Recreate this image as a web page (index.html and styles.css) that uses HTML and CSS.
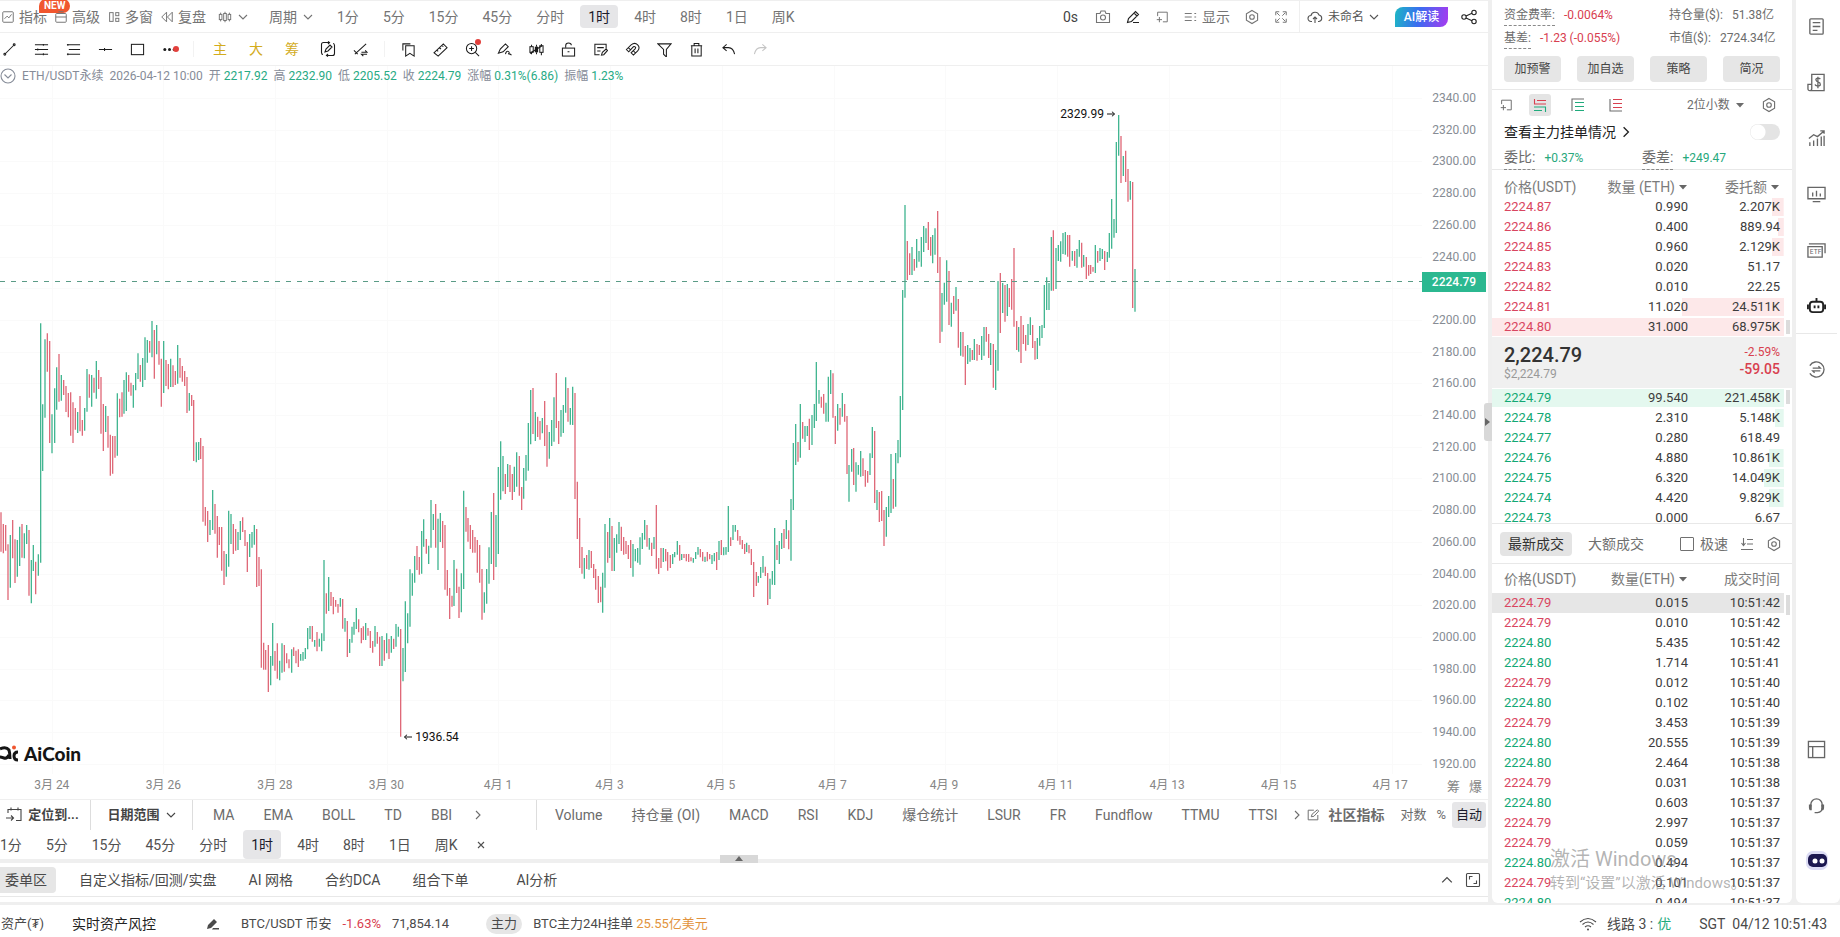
FILE: index.html
```html
<!DOCTYPE html>
<html lang="zh-CN">
<head>
<meta charset="utf-8">
<title>ETH/USDT永续 - AiCoin</title>
<link rel="stylesheet" href="styles.css">
</head>
<body>
<svg class="sprite" width="0" height="0" aria-hidden="true">
  <symbol id="down" viewBox="0 0 10 10"><path d="M1 3l4 4 4-4"/></symbol>
  <symbol id="up" viewBox="0 0 10 10"><path d="M1 7l4-4 4 4"/></symbol>
  <symbol id="right" viewBox="0 0 10 10"><path d="M3 1l4 4-4 4"/></symbol>
  <symbol id="tri" viewBox="0 0 10 10"><path class="fill" d="M1 3h8L5 7.500z"/></symbol>
  <symbol id="hex" viewBox="0 0 16 16"><path d="M8 1.500l5.600 3.200v6.600L8 14.500l-5.600-3.200V4.700z"/><circle cx="8" cy="8" r="2.300"/></symbol>
  <symbol id="dock" viewBox="0 0 16 16"><path d="M3 7V2.500h11v11H9M2 11h6M5 8v6"/></symbol>
  <symbol id="pencil" viewBox="0 0 16 16"><path d="M2.500 13.500l1-4 7-7 3 3-7 7zM9 4l3 3M8 13.500h6"/></symbol>
  <symbol id="edit" viewBox="0 0 16 16"><path d="M9 2.500H2.500v11h11V8M6 10l1-3 6-5 1.500 1.500-5.500 6z"/></symbol>
</svg>

<div class="app">
  <main class="main">
    <header class="bar top">
      <div class="tools">
        <button class="tool"><svg class="ic s14" viewBox="0 0 16 16"><rect x="2" y="2" width="12" height="12" rx="1"/><path d="M4 10l3-3 2 2 3-4"/></svg>指标<span class="new">NEW</span></button>
        <button class="tool"><svg class="ic s14" viewBox="0 0 16 16"><rect x="2" y="4" width="12" height="10" rx="1"/><path d="M2 8h12M5 2h6"/></svg>高级</button>
        <button class="tool"><svg class="ic s14" viewBox="0 0 16 16"><rect x="3" y="3" width="4" height="10"/><rect x="10" y="3" width="3.500" height="3.500"/><rect x="10" y="9.500" width="3.500" height="3.500"/></svg>多窗</button>
        <button class="tool"><svg class="ic s14" viewBox="0 0 16 16"><path d="M7.500 2.500v11L2 8zM14 2.500v11L8.500 8z"/></svg>复盘</button>
      </div>
      <button class="tool kind" aria-label="图表类型"><svg class="ic s14" viewBox="0 0 16 16"><rect x="1.500" y="5" width="3" height="6"/><rect x="6.500" y="4" width="3" height="8"/><rect x="11.500" y="5" width="3" height="6"/><path d="M3 3v2M3 11v2M8 2v2M8 12v2M13 3v2M13 11v2"/></svg><svg class="ic s10"><use href="#down"/></svg></button>
      <button class="tool cycle">周期<svg class="ic s10"><use href="#down"/></svg></button>
      <nav class="periods">
        <button>1分</button><button>5分</button><button>15分</button><button>45分</button><button>分时</button><button class="on">1时</button><button>4时</button><button>8时</button><button>1日</button><button>周K</button>
      </nav>
      <div class="topright">
        <span class="sec">0s</span>
        <button aria-label="截图"><svg class="ic s16" viewBox="0 0 16 16"><path d="M1.500 4.500H5L6 2h4l1 2.500h3.500v9h-13z"/><circle cx="8" cy="8.500" r="2.500"/></svg></button>
        <button aria-label="画笔" class="dark"><svg class="ic s16"><use href="#pencil"/></svg></button>
        <button aria-label="停靠"><svg class="ic s14"><use href="#dock"/></svg></button>
        <button class="tool"><svg class="ic s14" viewBox="0 0 16 16"><path d="M2 4h8M2 8h8M2 12h8M13 4h2M13 8h2M13 12h2"/></svg>显示</button>
        <button aria-label="设置"><svg class="ic s16"><use href="#hex"/></svg></button>
        <button aria-label="全屏"><svg class="ic s14" viewBox="0 0 16 16"><path d="M2 6V2h4M10 2h4v4M14 10v4h-4M6 14H2v-4M3 3l3.500 3.500M13 3L9.500 6.500M13 13L9.500 9.500M3 13l3.500-3.500"/></svg></button>
      </div>
      <div class="account">
        <button class="tool small"><svg class="ic s16" viewBox="0 0 16 16"><path d="M5 12.500H4a3 3 0 0 1 0-6 4.200 4.200 0 0 1 8-.5 3.300 3.300 0 0 1 0 6.500h-1M8 14V8M6 10l2-2 2 2"/></svg>未命名<svg class="ic s10"><use href="#down"/></svg></button>
        <button class="ai">AI解读</button>
        <button class="dark" aria-label="分享"><svg class="ic s18" viewBox="0 0 18 18"><circle cx="4" cy="9" r="2.200"/><circle cx="14" cy="4.500" r="2.200"/><circle cx="14" cy="13.500" r="2.200"/><path d="M6 8l6-2.700M6 10l6 2.700"/></svg></button>
      </div>
    </header>

    <div class="bar draw">
      <div class="slots first">
        <button aria-label="线段"><svg class="ic" viewBox="0 0 16 16"><path d="M4 12l8-8"/><circle cx="3" cy="13" r="1"/><circle cx="13" cy="3" r="1"/></svg></button>
        <button aria-label="水平线"><svg class="ic" viewBox="0 0 16 16"><path d="M1 3h14M1 8h14M1 13h14M10 2v2M4 7v2M10 12v2"/></svg></button>
        <button aria-label="平行线"><svg class="ic" viewBox="0 0 16 16"><path d="M1 3h14M3 8h12M1 13h14M2 2v2M2 12v2"/></svg></button>
        <button aria-label="射线"><svg class="ic" viewBox="0 0 16 16"><path d="M1 8h14M7 6.500v3"/></svg></button>
        <button aria-label="矩形"><svg class="ic" viewBox="0 0 16 16"><rect x="1.500" y="2.500" width="13" height="11"/></svg></button>
        <button aria-label="更多" class="dotred low"><svg class="ic" viewBox="0 0 16 16"><g class="fill"><circle cx="3" cy="8" r="1.600"/><circle cx="8" cy="8" r="1.600"/><circle cx="13" cy="8" r="1.600"/></g></svg></button>
      </div>
      <div class="slots words"><button>主</button><button>大</button><button>筹</button></div>
      <div class="slots second">
        <button aria-label="编辑图形"><svg class="ic s16" viewBox="0 0 16 16"><path d="M9 1.500H3.500q-2 0-2 2v8q0 2 1.500 2M7 14.500h5.500q2 0 2-2v-8q0-2-1.500-2M8 .5l1.500 1L8 3M8 13l-1.500 1.500L8 15.500M5 11l1-3 4-4 2 2-4 4z"/></svg></button>
        <button aria-label="连续画线"><svg class="ic" viewBox="0 0 16 16"><path d="M2 13L14 2M1 9l4 4M9 11h6l-2-2M15 13H9l2 2"/></svg></button>
      </div>
      <div class="slots third">
        <button aria-label="收藏"><svg class="ic" viewBox="0 0 16 16"><path d="M5 4h9v11l-4.500-3L5 15zM2 9V2h8"/></svg></button>
        <button aria-label="测量"><svg class="ic" viewBox="0 0 16 16"><path d="M1 11.500L11 2l4 4-9.500 9zM4 8.500l1.500 1.500M7 6l1.500 1.500M9.500 3.500L11 5"/></svg></button>
        <button aria-label="放大" class="dotred high"><svg class="ic" viewBox="0 0 16 16"><circle cx="7" cy="7" r="5.500"/><path d="M11 11l4 4M4.500 7h5M7 4.500v5"/></svg></button>
        <button aria-label="笔刷"><svg class="ic" viewBox="0 0 16 16"><path d="M1.500 12l2-4.500L9 2l3 3-5.500 5.500L1.500 12zM9 13q1-4 3-3t0 3q1-1 3.500 1"/></svg></button>
        <button aria-label="K线"><svg class="ic" viewBox="0 0 16 16"><rect x="1" y="5" width="3.500" height="6"/><rect x="6.200" y="5" width="3.500" height="6" class="fill"/><rect x="11.500" y="4" width="3.500" height="7"/><path d="M2.700 3v2M2.700 11v2M8 3v2M8 11v2M13.200 2v2M13.200 11v3M1 12l13-8"/></svg></button>
        <button aria-label="锁定"><svg class="ic" viewBox="0 0 16 16"><rect x="1.500" y="6.500" width="13" height="8.500"/><path d="M5 6V4q0-3 3-3t3 2.500M7 10.500h2"/></svg></button>
        <button aria-label="笔记"><svg class="ic" viewBox="0 0 16 16"><path d="M14 7V2.500H2v11h5M4.500 6h7M4.500 9.500H8M9 14l1-3 4-3.500 1.500 1.500-4 4.500z"/></svg></button>
        <button aria-label="磁铁"><svg class="ic" viewBox="0 0 16 16"><path d="M1.500 8l5-5q4-3 7 0t0 6.500L9 14l-2.500-2.500 4.500-4.500q1-1.500-.5-2t-2 .5L4 10.500zM3.500 6l2.500 2.500M9 9.500l2.500 2.500"/></svg></button>
        <button aria-label="筛选"><svg class="ic" viewBox="0 0 16 16"><path d="M1 2h14L10 8v8l-3-3V8z"/></svg></button>
        <button aria-label="删除"><svg class="ic" viewBox="0 0 16 16"><path d="M2 4h12M5.500 4V1.500h5V4M3 4v11h10V4M6.500 7v5M9.500 7v5"/></svg></button>
        <button aria-label="撤销"><svg class="ic" viewBox="0 0 16 16"><path d="M6 2.500L2 6l4 3.500M2 6h6q5 0 6.500 7"/></svg></button>
        <button aria-label="重做" class="off"><svg class="ic" viewBox="0 0 16 16"><path d="M10 2.500L14 6l-4 3.500M14 6H8Q3 6 1.500 13"/></svg></button>
      </div>
    </div>

    <section class="chart">
      <svg class="plot" viewBox="0 0 1488 708" preserveAspectRatio="none">
        <path id="grid" class="gridline"/>
        <path id="rise" class="rise"/>
        <path id="fall" class="fall"/>
        <path class="last" d="M0 215.500H1422"/>
      </svg>
      <p class="info"><svg class="ic s16" viewBox="0 0 16 16"><circle cx="8" cy="8" r="7"/><path d="M4.500 6.500L8 10l3.500-3.500"/></svg><span>ETH/USDT永续</span><span>2026-04-12 10:00</span><span>开 <b>2217.92</b></span><span>高 <b>2232.90</b></span><span>低 <b>2205.52</b></span><span>收 <b>2224.79</b></span><span>涨幅 <b>0.31%(6.86)</b></span><span>振幅 <b>1.23%</b></span></p>
      <div class="prices"><span>2340.00</span><span>2320.00</span><span>2300.00</span><span>2280.00</span><span>2260.00</span><span>2240.00</span><span class="hid">2220.00</span><span>2200.00</span><span>2180.00</span><span>2160.00</span><span>2140.00</span><span>2120.00</span><span>2100.00</span><span>2080.00</span><span>2060.00</span><span>2040.00</span><span>2020.00</span><span>2000.00</span><span>1980.00</span><span>1960.00</span><span>1940.00</span><span>1920.00</span></div>
      <span class="tag">2224.79</span>
      <span class="mark high">2329.99 <svg class="ic arrow" viewBox="0 0 10 10"><path d="M0 5h8M5.500 2.500L8.500 5l-3 2.500"/></svg></span>
      <span class="mark low"><svg class="ic arrow" viewBox="0 0 10 10"><path d="M10 5H2M4.500 2.500L1.500 5l3 2.500"/></svg> 1936.54</span>
      <span class="logo"><svg width="20" height="20" viewBox="0 0 20 20"><path class="ink" d="M0 5q6-3 9 1 1 3 1 9M9 11q-2 4-5 3t-4-1"/><path class="ink" d="M18 8q-4 0-4 4t4 4"/><circle class="spot" cx="14" cy="3.500" r="2"/></svg>AiCoin</span>
    </section>
    <div class="times">
      <div class="dates"><span>3月 24</span><span>3月 26</span><span>3月 28</span><span>3月 30</span><span>4月 1</span><span>4月 3</span><span>4月 5</span><span>4月 7</span><span>4月 9</span><span>4月 11</span><span>4月 13</span><span>4月 15</span><span>4月 17</span></div>
      <div class="chips"><button>筹</button><button>爆</button></div>
    </div>

    <div class="indicators">
      <button class="cell strong locate"><svg class="ic s18" viewBox="0 0 18 18"><path d="M3 7V3.500h13v11h-5M6 1.500v3M13 1.500v3M1 12h7M6 9.500L8.500 12 6 14.500"/></svg>定位到...</button>
      <button class="cell strong range">日期范围<svg class="ic s10"><use href="#down"/></svg></button>
      <div class="cell list main-ind"><button>MA</button><button>EMA</button><button>BOLL</button><button>TD</button><button>BBI</button><button class="next" aria-label="更多"><svg class="ic s10"><use href="#right"/></svg></button></div>
      <div class="cell list sub-ind"><button>Volume</button><button>持仓量 (OI)</button><button>MACD</button><button>RSI</button><button>KDJ</button><button>爆仓统计</button><button>LSUR</button><button>FR</button><button>Fundflow</button><button>TTMU</button><button>TTSI</button></div>
      <div class="cell scale"><svg class="ic s10"><use href="#right"/></svg><button class="community"><svg class="ic s14"><use href="#edit"/></svg>社区指标</button><button>对数</button><button>%</button><button class="on">自动</button></div>
    </div>
    <nav class="periods lower">
      <button>1分</button><button>5分</button><button>15分</button><button>45分</button><button>分时</button><button class="on">1时</button><button>4时</button><button>8时</button><button>1日</button><button>周K</button><button class="close" aria-label="关闭"><svg class="ic s8" viewBox="0 0 8 8"><path d="M1 1l6 6M7 1L1 7"/></svg></button>
    </nav>
    <div class="split"><button aria-label="展开"><svg class="ic s10"><path class="fill" d="M1 7h8L5 2z"/></svg></button></div>
    <nav class="orders">
      <button class="on">委单区</button><button>自定义指标/回测/实盘</button><button>AI 网格</button><button>合约DCA</button><button>组合下单</button><button class="analysis">AI分析</button>
      <div class="ordersright"><button aria-label="收起"><svg class="ic s12"><use href="#up" /></svg></button><button aria-label="最大化"><svg class="ic s16" viewBox="0 0 16 16"><rect x="1.500" y="1.500" width="13" height="13" rx="1"/><path d="M4.500 7.500v-3h3M11.500 8.500v3h-3"/></svg></button></div>
    </nav>
    <button class="fold" aria-label="折叠面板"><svg class="ic s10"><path class="fill" d="M2 1v8l5-4z"/></svg></button>
  </main>

  <aside class="panel">
    <div class="stats">
      <p><span class="dash">资金费率:</span><b class="red">-0.0064%</b></p><p>持仓量($):<b>51.38亿</b></p>
      <p><span class="dash">基差:</span><b class="red">-1.23 (-0.055%)</b></p><p>市值($):<b>2724.34亿</b></p>
    </div>
    <div class="actions"><button>加预警</button><button>加自选</button><button>策略</button><button>简况</button></div>
    <div class="views">
      <button aria-label="停靠"><svg class="ic s14"><use href="#dock"/></svg></button>
      <button class="on" aria-label="买卖盘"><svg class="ic s14" viewBox="0 0 14 14"><path class="cr" d="M1.500 1v5M4 2.500h9M1 6h12"/><path class="cg" d="M1 9h12M1 12.500h8M12.500 9v5"/></svg></button>
      <button aria-label="买盘"><svg class="ic s14" viewBox="0 0 14 14"><path d="M1 13V1h12"/><path class="cg" d="M4 4.500h9M4 8.500h9M4 12.500h9"/></svg></button>
      <button aria-label="卖盘"><svg class="ic s14" viewBox="0 0 14 14"><path d="M1 1v12h12"/><path class="cr" d="M4 1.500h9M4 5.500h9M4 9.500h9"/></svg></button>
      <label class="decimals"><select aria-label="小数位"><option>2位小数</option></select><svg class="ic s10"><use href="#tri"/></svg></label>
      <button aria-label="设置"><svg class="ic s16"><use href="#hex"/></svg></button>
    </div>
    <div class="whale"><label for="whale">查看主力挂单情况</label><svg class="ic s12"><use href="#right"/></svg><input id="whale" type="checkbox" class="toggle"></div>
    <div class="ratio"><p><span class="dash">委比:</span><b>+0.37%</b></p><p><span class="dash">委差:</span><b>+249.47</b></p></div>

    <table class="book asks">
      <thead><tr><th>价格(USDT)</th><th>数量 (ETH)<svg class="ic s10"><use href="#tri"/></svg></th><th>委托额<svg class="ic s10"><use href="#tri"/></svg></th></tr></thead>
      <tbody>
        <tr style="--d:4%"><td>2224.87</td><td>0.990</td><td>2.207K</td></tr>
        <tr style="--d:2%"><td>2224.86</td><td>0.400</td><td>889.94</td></tr>
        <tr style="--d:4%"><td>2224.85</td><td>0.960</td><td>2.129K</td></tr>
        <tr><td>2224.83</td><td>0.020</td><td>51.17</td></tr>
        <tr><td>2224.82</td><td>0.010</td><td>22.25</td></tr>
        <tr style="--d:35%"><td>2224.81</td><td>11.020</td><td>24.511K</td></tr>
        <tr style="--d:100%"><td>2224.80</td><td>31.000</td><td>68.975K</td></tr>
      </tbody>
    </table>
    <div class="price"><div><strong>2,224.79</strong><small>$2,224.79</small></div><div class="chg"><span>-2.59%</span><b>-59.05</b></div></div>
    <div class="clip">
      <table class="book bids">
        <tbody>
          <tr style="--d:100%"><td>2224.79</td><td>99.540</td><td>221.458K</td></tr>
          <tr style="--d:3%"><td>2224.78</td><td>2.310</td><td>5.148K</td></tr>
          <tr><td>2224.77</td><td>0.280</td><td>618.49</td></tr>
          <tr style="--d:5%"><td>2224.76</td><td>4.880</td><td>10.861K</td></tr>
          <tr style="--d:7%"><td>2224.75</td><td>6.320</td><td>14.049K</td></tr>
          <tr style="--d:5%"><td>2224.74</td><td>4.420</td><td>9.829K</td></tr>
          <tr><td>2224.73</td><td>0.000</td><td>6.67</td></tr>
        </tbody>
      </table>
    </div>
    <div class="deals"><button class="on">最新成交</button><button>大额成交</button><label class="fast"><input type="checkbox">极速</label><button aria-label="排序"><svg class="ic s14" viewBox="0 0 14 14"><path d="M7 2.500h6M7 7h6M1 12.500h12M3.500 1v7M1.500 6l2 2.500 2-2.500"/></svg></button><button aria-label="设置"><svg class="ic s16"><use href="#hex"/></svg></button></div>
    <div class="trades">
      <table class="book">
        <thead><tr><th>价格(USDT)</th><th>数量(ETH)<svg class="ic s10"><use href="#tri"/></svg></th><th>成交时间</th></tr></thead>
        <tbody>
          <tr class="sell hot"><td>2224.79</td><td>0.015</td><td>10:51:42</td></tr>
          <tr class="sell"><td>2224.79</td><td>0.010</td><td>10:51:42</td></tr>
          <tr class="buy"><td>2224.80</td><td>5.435</td><td>10:51:42</td></tr>
          <tr class="buy"><td>2224.80</td><td>1.714</td><td>10:51:41</td></tr>
          <tr class="sell"><td>2224.79</td><td>0.012</td><td>10:51:40</td></tr>
          <tr class="buy"><td>2224.80</td><td>0.102</td><td>10:51:40</td></tr>
          <tr class="sell"><td>2224.79</td><td>3.453</td><td>10:51:39</td></tr>
          <tr class="buy"><td>2224.80</td><td>20.555</td><td>10:51:39</td></tr>
          <tr class="buy"><td>2224.80</td><td>2.464</td><td>10:51:38</td></tr>
          <tr class="sell"><td>2224.79</td><td>0.031</td><td>10:51:38</td></tr>
          <tr class="buy"><td>2224.80</td><td>0.603</td><td>10:51:37</td></tr>
          <tr class="sell"><td>2224.79</td><td>2.997</td><td>10:51:37</td></tr>
          <tr class="sell"><td>2224.79</td><td>0.059</td><td>10:51:37</td></tr>
          <tr class="buy"><td>2224.80</td><td>0.494</td><td>10:51:37</td></tr>
          <tr class="sell"><td>2224.79</td><td>0.101</td><td>10:51:37</td></tr>
          <tr class="buy"><td>2224.80</td><td>0.494</td><td>10:51:37</td></tr>
        </tbody>
      </table>
    </div>
    <i class="thumb t1"></i><i class="thumb t2"></i><i class="thumb t3"></i>
    <div class="watermark"><p>激活 Windows</p><p>转到“设置”以激活 Windows。</p></div>
  </aside>

  <nav class="side">
    <button aria-label="资讯"><svg class="ic" viewBox="0 0 20 20"><rect x="3" y="2" width="14" height="16" rx="1"/><path d="M6 6h8M6 10h8M6 14h5"/></svg></button>
    <button aria-label="账单"><svg class="ic" viewBox="0 0 20 20"><path d="M5 1.500h13v17H3q-2 0-2-2V12h4zM5 12v4.500q0 2-2 2M14 6.500q-1-1.500-3-1t-1.500 2 2.500 2 2 2.500-3 1.500-2-1.500M11.500 4v12"/></svg></button>
    <button aria-label="行情"><svg class="ic" viewBox="0 0 20 20"><path d="M3 18v-4M7 18v-6M11 18V10M15 18V8M18 18V7M2 10l5-4 4 2 7-6M14 2h4v3"/></svg></button>
    <button aria-label="看板"><svg class="ic" viewBox="0 0 20 20"><path d="M1 2.500h18v12H1zM6 17.500h8M6 12V8M10 12V6M14 12V9"/></svg></button>
    <button aria-label="ETF"><svg class="ic" viewBox="0 0 20 20"><path d="M1 6h15v11H1zM2 3h17v10"/><text class="etf" x="3" y="14">ETF</text></svg></button>
    <button aria-label="AI" class="bot"><svg class="ic" viewBox="0 0 20 20"><rect x="3" y="6" width="14" height="11" rx="3"/><path d="M10 6V2M1 9v5M19 9v5M8 10v3M12 10v3"/></svg></button>
    <button aria-label="兑换" class="swap"><svg class="ic" viewBox="0 0 20 20"><path d="M3 6a8 8 0 1 1 0 8M6 8.500h8l-2-2M14 11.500H6l2 2"/></svg></button>
    <button aria-label="布局" class="push"><svg class="ic" viewBox="0 0 20 20"><rect x="1.500" y="1.500" width="17" height="17"/><path d="M1.500 7h17M6 7v11"/></svg></button>
    <button aria-label="客服"><svg class="ic" viewBox="0 0 20 20"><path d="M4 11V9a6 6 0 0 1 12 0v2M8 17.500h3q5-1 5-5"/><path class="fill" d="M2 9h3v6H3q-1-1-1-3zM15 9h3v3q0 2-1 3h-2z"/></svg></button>
    <button aria-label="助手"><svg width="22" height="22" viewBox="0 0 22 22"><rect class="halo" x="0" y="1" width="22" height="19" rx="7"/><rect class="face" x="2" y="4" width="19" height="13" rx="5"/><circle class="eye" cx="9" cy="11" r="2.500"/><circle class="eye" cx="16" cy="11" r="2.500"/></svg></button>
  </nav>
</div>

<footer class="status">
  <span>资产(₮)</span><span class="risk">实时资产风控</span>
  <button aria-label="编辑"><svg class="ic s14" viewBox="0 0 14 14"><path class="fill" d="M1 12l1-4 6-6 3 3-6 6zM7 11h6v1.500H6z"/></svg></button>
  <span class="pair">BTC/USDT 币安</span><span class="red">-1.63%</span><span>71,854.14</span>
  <span class="pill">主力</span><span class="whales">BTC主力24H挂单 <b>25.55亿美元</b></span>
  <div class="net"><svg class="ic s18" viewBox="0 0 18 18"><path d="M1 7q8-7 16 0M3.500 9.500q5.500-5 11 0M6 12q3-2.500 6 0"/><circle class="fill" cx="9" cy="14.500" r="1"/></svg>线路 3 : <b>优</b></div><time>SGT&nbsp; 04/12 10:51:43</time>
</footer>
<script src="chart.js"></script>
</body>
</html>
```
FILE: styles.css
```css
* { box-sizing: border-box; }
body { margin: 0; height: 100vh; display: flex; flex-direction: column; background: #efefef; color: #4a4a4a; font: 14px/20px Roboto, "Noto Sans CJK SC", sans-serif; overflow: hidden; }
p { margin: 0; }
b { font-weight: 400; }
button { border: 0; padding: 0; background: none; font: inherit; color: inherit; white-space: nowrap; display: flex; align-items: center; justify-content: center; }
.sprite { position: absolute; }
.ic { fill: none; stroke: currentColor; stroke-width: 1.1; width: 15px; height: 15px; flex: none; }
.ic .fill, .ic.fill { fill: currentColor; stroke: none; }
use .fill, symbol .fill { fill: currentColor; stroke: none; }
.s8 { width: 8px; height: 8px; }
.s10 { width: 10px; height: 10px; }
.s12 { width: 12px; height: 12px; }
.s14 { width: 14px; height: 14px; }
.s16 { width: 16px; height: 16px; }
.s18 { width: 18px; height: 18px; }
.red { color: #d8404f; }
.ic .cr { stroke: #d8404f; }
.ic .cg { stroke: #1fab7c; }

.app { flex: 1; min-height: 0; display: grid; grid-template-columns: 1fr 300px 44px; column-gap: 4px; }
.main { position: relative; min-width: 0; display: flex; flex-direction: column; background: #fff; margin-bottom: 1px; }

.bar { display: flex; align-items: center; height: 33px; flex: none; border-bottom: 1px solid #efefef; }
.top { border-top: 1px solid #efefef; color: #747474; }
.tools { display: flex; gap: 7px; padding-left: 1px; }
.tool { position: relative; gap: 5px; }
.tools .tool { gap: 4px; }
.new { position: absolute; left: 38px; top: -8px; padding: 0 5px; border-radius: 8px 8px 8px 0; background: #f0562f; color: #fff; font: 700 10px/14px Roboto, sans-serif; }
.kind { margin-left: 12px; gap: 6px; }
.cycle { margin-left: 21px; gap: 6px; }
.periods { display: flex; align-items: stretch; gap: 8px; margin-left: 16px; }
.periods button { padding: 0 8px; height: 23px; border-radius: 4px; }
.periods .on { background: #e6e6e8; color: #1c1c2c; }
.topright { display: flex; align-items: center; gap: 14px; margin-left: auto; padding-right: 11px; }
.sec { color: #444; margin-right: 3px; }
.dark { color: #222; }
.account { display: flex; align-items: center; height: 31px; gap: 12px; padding: 0 10px 0 7px; border-left: 1px solid #efefef; }
.small { font-size: 12px; color: #555; }
.ai { width: 53px; height: 20px; margin-left: 4px; border-radius: 8px 0 8px 0; background: linear-gradient(100deg, #1cb8c4, #3a6cf0 45%, #a83af0); color: #fff; font-size: 12px; font-weight: 500; }

.draw { color: #1c1c1c; }
.slots { display: flex; align-items: center; height: 16px; }
.slots button { width: 32px; position: relative; }
.first { margin-left: -7px; padding-right: 8px; border-right: 1px solid #f2f2f2; }
.words { padding-left: 8px; color: #d3ac1d; }
.words button { width: 36px; }
.second { padding: 0 8px 0 2px; border-right: 1px solid #f2f2f2; }
.third { padding-left: 7px; }
.dotred::after { content: ""; position: absolute; width: 6px; height: 6px; border-radius: 50%; background: #e2403c; }
.dotred.low::after { right: 6px; top: 4px; }
.dotred.high::after { right: 7px; top: -3px; }
.off { color: #c4c4c4; }

.chart { position: relative; flex: 1; min-height: 0; display: grid; }
.chart > .plot, .chart > .info, .chart > .prices { grid-area: 1 / 1; }
.plot { width: 100%; height: 100%; min-height: 0; }
.plot path { fill: none; vector-effect: non-scaling-stroke; }
.plot .gridline { stroke: #fafafa; }
.plot .rise { stroke: #2fae86; stroke-width: 1.2px; }
.plot .fall { stroke: #dc5a6b; stroke-width: 1.2px; }
.plot .last { stroke: #5a9b86; stroke-dasharray: 5 6; }
.info { display: flex; align-items: center; align-self: start; gap: 6px; height: 20px; font-size: 12px; color: #868c98; white-space: nowrap; }
.info b { color: #27aa84; }
.prices { display: flex; flex-direction: column; justify-content: space-between; justify-self: end; padding: 24px 12px 2px 0; font-size: 12px; line-height: 16px; color: #868c94; }
.hid { visibility: hidden; }
.tag { position: absolute; right: 2px; top: 29.1%; width: 64px; height: 20px; background: #2bb890; color: #fff; font-size: 12px; font-weight: 500; text-align: center; }
.mark { position: absolute; display: flex; align-items: center; gap: 3px; color: #111; font-size: 12px; line-height: 16px; }
.arrow { width: 9px; height: 10px; }
.mark.high { right: 25%; top: 5.6%; }
.mark.low { left: 27.1%; top: 93.6%; }
.logo { position: absolute; left: 0; bottom: 9px; display: flex; align-items: center; gap: 4px; color: #151515; font: 900 19px/22px Lato, sans-serif; }
.ink { fill: none; stroke: #151515; stroke-width: 3; }
.spot { fill: #f0562f; }
.times { display: flex; flex: none; height: 26px; border-bottom: 1px solid #efefef; font-size: 12px; color: #868686; }
.dates { flex: 1; display: grid; grid-template-columns: repeat(13, 1fr); margin-left: -4px; margin-right: -8px; text-align: center; line-height: 22px; }
.chips { display: flex; width: 50px; padding-right: 6px; justify-content: flex-end; gap: 9px; font-size: 13px; }

.indicators { display: flex; flex: none; height: 30px; color: #6c6c6c; }
.cell { display: flex; align-items: center; }
.strong { font-size: 13px; font-weight: 700; color: #444; border-right: 1px solid #ddd; }
.locate { width: 91px; gap: 5px; padding-right: 6px; }
.range { width: 102px; gap: 6px; }
.list { gap: 29px; }
.main-ind { width: 344px; padding-left: 20px; border-right: 1px solid #ddd; }
.main-ind .next { margin-left: -8px; }
.sub-ind { padding-left: 18px; }
.scale { margin-left: auto; gap: 10px; padding-right: 2px; font-size: 13px; }
.community { gap: 8px; font-size: 14px; font-weight: 700; margin: 0 6px 0 -6px; }
.scale .on { height: 26px; padding: 0 4px; margin-left: -4px; background: #e6e6e8; color: #1c1c2c; border-radius: 3px; }
.lower { flex: none; height: 29px; margin-left: -8px; color: #505050; }
.lower button { height: 29px; }
.lower .close { margin-left: -5px; }
.split { flex: none; height: 4px; background: #efefef; display: flex; justify-content: center; align-items: flex-end; }
.split button { width: 38px; height: 8px; margin-right: 10px; background: #d8d8d8; color: #666; }
.orders { flex: none; display: flex; align-items: center; height: 34px; gap: 32px; margin-bottom: 5px; border-bottom: 1px solid #e8e8e8; }
.orders .on { height: 26px; padding: 0 9px 0 5px; margin-right: -9px; background: #e6e6e6; border-radius: 0 4px 4px 0; }
.analysis { margin-left: 16px; }
.ordersright { display: flex; gap: 12px; margin-left: auto; padding-right: 7px; }
.fold { position: absolute; right: -4px; top: 44.7%; width: 8px; height: 38px; background: #d8d8d8; border-radius: 3px 0 0 3px; color: #666; z-index: 2; }

.panel { position: relative; display: flex; flex-direction: column; min-height: 0; background: #fff; border-radius: 0 0 6px 6px; overflow: hidden; color: #6c6c6c; }
.stats { display: grid; grid-template-columns: 165px 1fr; row-gap: 2px; padding: 5px 0 0 12px; font-size: 12px; }
.stats b { margin-left: 9px; }
.dash { display: inline-block; border-bottom: 1px dashed #8a8a8a; }
.actions { display: grid; grid-template-columns: repeat(4, 1fr); gap: 16px; padding: 7px 12px; border-bottom: 1px solid #e8e8e8; }
.actions button { height: 26px; border-radius: 4px; background: #e6e6e6; font-size: 12px; color: #444; }
.views { display: flex; align-items: center; height: 30px; padding: 0 15px 0 7px; gap: 16px; }
.views button { height: 22px; }
.views .on { width: 22px; background: #e4e4e4; border-radius: 3px; }
.views button + button + button { margin: 0 4px; }
.views .decimals + button { margin: 0; }
.decimals { display: flex; align-items: center; gap: 5px; margin-left: auto; }
select { appearance: none; border: 0; padding: 0; background: none; font: inherit; font-size: 12px; color: inherit; }
.whale { display: flex; align-items: center; height: 24px; padding: 0 12px; gap: 4px; color: #222; }
.toggle { appearance: none; width: 30px; height: 16px; margin: 0 0 0 auto; border-radius: 8px; background: radial-gradient(circle at 8px 8px, #fff 7px, #e4e4e4 8px); }
.ratio { display: grid; grid-template-columns: 138px 1fr; padding: 3px 0 0 12px; height: 26px; border-bottom: 1px solid #e8e8e8; }
.ratio .dash { height: 23px; }
.ratio b { margin-left: 9px; font-size: 12px; color: #27a87c; }
.book { width: 292px; flex: none; table-layout: fixed; border-collapse: collapse; font-size: 13px; color: #3c3c3c; }
.book th { height: 27px; padding: 7px 0 0; font-size: 14px; line-height: 20px; font-weight: 400; color: #7c7c7c; text-align: right; white-space: nowrap; }
.book th .ic { margin-left: 3px; color: #666; }
.book td { height: 20px; padding: 0; line-height: 20px; text-align: right; }
.book tr > :first-child { width: 100px; padding-left: 12px; text-align: left; }
.book tr > :nth-child(2) { width: 96px; }
.book tr > :last-child { padding-right: 4px; }
.asks td:first-child, .sell td:first-child { color: #d94560; }
.bids td:first-child, .buy td:first-child { color: #12a874; }
.asks tbody tr { background: linear-gradient(#fde8e9, #fde8e9) right / var(--d, 0%) 18px no-repeat; }
.bids tbody tr { background: linear-gradient(#e4f8ef, #e4f8ef) right / var(--d, 0%) 18px no-repeat; }
.price { display: flex; justify-content: space-between; flex: none; height: 51px; padding: 7px 12px 0; background: #f0f0f0; }
.price div { display: flex; flex-direction: column; }
.price strong { font-size: 20px; line-height: 22px; font-weight: 500; color: #333; }
.price small { font-size: 12px; line-height: 16px; color: #999; }
.price .chg { text-align: right; font-size: 12px; line-height: 16px; color: #d8404f; }
.chg b { font-size: 14px; font-weight: 500; line-height: 18px; }
.clip { flex: none; height: 136px; overflow: hidden; border-bottom: 1px solid #e8e8e8; }
.deals { display: flex; align-items: center; flex: none; height: 40px; padding: 0 10px 0 8px; color: #707070; gap: 12px; border-bottom: 1px solid #e8e8e8; }
.deals .on { width: 72px; height: 24px; background: #e4e4e4; border-radius: 4px; color: #333; margin-right: 4px; }
.fast { display: flex; align-items: center; gap: 6px; margin-left: auto; }
.fast input { appearance: none; width: 14px; height: 14px; margin: 0; border: 1px solid #707070; border-radius: 1px; }
.trades { flex: 1; min-height: 0; overflow: hidden; }
.trades th { height: 29px; padding-top: 0; }
.hot { background: #e6e6e6; }
.thumb { position: absolute; right: 2px; width: 4px; height: 14px; background: #dcdcdc; }
.t1 { top: 320px; }
.t2 { top: 390px; }
.t3 { top: 595px; height: 20px; }
.watermark { position: absolute; left: 58px; bottom: 9px; color: rgba(130, 130, 130, .6); font-size: 15px; line-height: 22px; white-space: nowrap; pointer-events: none; }
.watermark p:first-child { font-size: 20px; line-height: 26px; }

.side { display: flex; flex-direction: column; align-items: center; background: #fff; border-radius: 0 0 6px 6px; padding: 0 3px 14px 0; color: #666; }
.side button { width: 100%; height: 56px; flex: none; }
.side button:first-child { margin-top: -2px; }
.side .ic { width: 19px; height: 19px; stroke-width: 1.4; }
.side .bot { color: #222; border-bottom: 1px solid #e8e8e8; }
.side .bot .ic { stroke-width: 2; }
.side .swap { margin-top: 7px; }
.side .push { margin-top: auto; }
.etf { font: 7px Roboto, sans-serif; fill: currentColor; stroke: none; }
.halo { fill: #dcdcf4; }
.face { fill: #1c1850; }
.eye { fill: #fff; }

.status { flex: none; display: flex; align-items: center; height: 32px; margin-top: 3px; padding: 5px 13px 0 1px; background: #fff; font-size: 13px; white-space: nowrap; }
.risk { margin: 0 50px 0 28px; font-size: 14px; color: #222; }
.pair { margin: 0 11px 0 21px; }
.status .red { margin-right: 11px; }
.pill { margin: 0 11px 0 37px; padding: 0 5px; border-radius: 10px; background: #e6e6e6; }
.whales b { color: #e2933c; }
.net { display: flex; align-items: center; gap: 4px; margin-left: auto; margin-right: 28px; font-size: 14px; }
.net .ic { margin-right: 6px; }
.net b { color: #1fab7c; }
time { font-size: 14px; }
```
FILE: chart.js
```js
// Bars are "colour x:high-low", three units to one pixel, per segment origin.
const segments = [
  { x: 0, y: 224, bars: 'r3:667-785 r10:702-790 r17:705-782 r24:763-930 g31:735-893 r38:690-805 r45:748-879 g52:750-860 g59:710-828 r66:702-803 g73:730-805 g80:705-762 r87:720-917 g94:810-940 g100:765-843 r107:815-913 g115:793-857 g122:100-818 g128:343-543 g135:148-383 r142:130-245 r149:153-459 g156:373-490 g164:295-459 g170:232-359 r177:192-335 g184:255-332 r191:270-315 r198:288-366 r205:309-382 r212:307-437 r219:337-459 r226:354-419 g233:366-429 r240:318-424 r247:390-437 g254:354-422 g261:237-365 r268:253-323 g275:255-350 r282:263-308 g289:213-326 r296:240-297 r303:261-431 r310:342-483 g317:348-426 r324:378-473 r331:434-557 r338:438-551 r345:438-503 g352:310-497 r359:326-382 r366:307-380 g372:270-371 g379:247-363 r386:255-305 r393:278-317 g400:285-353 g407:249-301 g414:190-267 r421:225-275 g428:204-291 g435:142-270 g442:150-218 r449:153-188 g456:93-202 r463:120-266 g470:105-193 r477:153-224 r484:206-350 g491:153-309 r498:210-288 r505:222-298 g512:206-291 r519:226-291 r526:243-285 g533:165-281 r540:204-263 r547:228-275 r554:243-288 r561:261-369 g568:309-362 r575:315-348 r581:330-513 g589:457-517 g596:456-510 r602:444-507 r609:468-695 r616:651-707 r623:663-756 g630:690-735 g638:600-720 r645:642-731 r652:678-803 r658:711-765 r665:711-842 r672:783-885 g679:792-860 g686:662-830 g693:672-762 r700:702-792 r707:717-782 g714:726-780 g721:693-750 r728:682-726 r735:720-768 r742:756-846 g749:732-801 g756:726-773 g763:705-764 r770:717-891 r777:801-888 r784:838-1133 r791:1058-1139 r797:1080-1139 r805:1065-1206 g812:1098-1186 g818:999-1127 r825:1083-1142 r832:1060-1166 g839:1112-1171 g846:1060-1148 r853:1065-1145 r860:1090-1120 r867:1108-1135 g875:1078-1148 r881:1072-1098 r888:1082-1120 r895:1078-1131 g902:1092-1112 g909:1086-1112 g916:1074-1107 g923:1014-1078 g930:1008-1047 r937:1008-1055 g944:1050-1070 r951:1026-1084 g958:1046-1070 g965:1030-1084 g972:810-1053 r979:910-971 g986:861-963 r993:906-948 r1000:921-973 r1007:930-950 r1014:942-968 g1021:924-950 r1028:927-1016 g1035:984-1025 r1042:993-1101 g1049:1047-1089 g1056:1010-1058 g1062:996-1034 g1069:954-1017 r1076:988-1027 r1084:1014-1060 r1090:1009-1050 g1097:999-1050 r1104:1014-1037 r1111:1023-1074 r1118:1053-1088 g1125:1008-1070 r1132:1026-1061 r1139:1040-1128 g1146:1038-1128 r1153:1050-1112 g1160:1030-1090 r1167:1047-1107 g1174:1038-1088 r1181:1046-1077 g1188:1002-1070 g1195:1010-1040 r1202:1017-1340 g1209:1074-1174 g1216:934-1146 g1223:970-1060 g1230:838-1010 g1237:850-917 g1244:798-878 r1251:768-840 r1258:801-854 g1265:723-851 g1271:688-770 r1279:747-791 g1286:767-822 g1293:630-773 g1300:672-720 r1307:642-773 g1314:686-840 g1321:669-756 r1328:693-774 r1335:705-899 r1342:840-917 r1349:894-987 r1356:917-950 g1362:810-948 r1370:836-909 r1377:890-984 g1384:850-967 g1391:602-897 r1398:651-725 r1404:684-755 r1411:705-777 r1418:720-788 r1425:741-788' },
  { x: 460, y: 284, bars: 'r45:562-607 r52:570-668 r59:585-698 r66:657-809 g73:727-788 g80:657-761 g87:592-701 g94:486-642 r101:429-690 g108:495-651 g115:351-612 g122:274-449 g129:318-424 r136:372-432 g143:342-411 r150:345-426 r157:372-450 g163:350-426 g170:307-410 r178:318-437 r185:411-480 g191:354-446 g198:315-392 g205:219-362 g212:120-283 r219:114-252 g226:186-273 r233:200-261 r240:213-269 g247:204-250 r254:153-288 r261:225-350 g268:246-326 g275:210-288 g282:142-275 r289:69-234 r296:213-282 g303:180-260 g310:165-249 g317:82-188 r324:114-215 g331:174-224 g338:110-225 r345:129-447 r352:395-567 r359:504-654 r366:591-671 g373:624-686 r380:615-657 g387:600-659 r394:603-654 r401:642-684 r407:657-719 r415:678-759 r422:710-757 g428:668-788 g435:522-713 r443:546-638 g449:504-624 r456:528-663 g463:564-663 g470:553-608 g477:516-582 r484:530-603 r491:561-614 r498:573-612 r505:585-627 r512:570-654 g519:582-680 g526:597-634 g533:594-638 g540:562-644 g547:549-597 g554:510-569 r561:525-590 g568:564-599 r575:578-618 g582:561-597 r589:465-656 r596:624-672 r603:594-654 g610:594-636 r617:597-634 r623:606-662 r631:615-654 g638:612-642 g644:606-622 g652:573-614 r659:585-632 g665:612-630 r672:612-624 r679:612-634 r686:612-636 r693:622-634 g700:624-638 g707:606-627 g714:591-614 r721:597-622 r728:606-634 g735:620-636 r742:606-634 r749:612-628 g756:615-642 g763:609-634 r770:606-660 g777:573-630 r784:570-615 g791:592-616 g798:591-614 g805:468-606 r812:562-588 g819:525-570 g826:525-545 r833:540-572 r840:558-584 r847:570-597 r854:582-612 g860:578-606 r867:585-610 r874:597-645 r881:636-741 r889:666-708 g895:678-698 g902:651-684 g909:618-668 r916:650-678 r923:669-765 g930:686-747 g937:663-704 g944:534-705 r951:585-630 g958:573-642 g965:549-597 r972:537-594 g979:510-567 r986:541-598 g993:447-632 g1000:279-480 g1007:222-345 r1014:276-335 g1021:162-323 r1028:216-266 g1035:228-276 g1042:228-258 r1048:206-300 g1056:195-285 g1063:162-234 g1069:36-213 g1077:120-161' },
  { x: 820, y: 24, bars: 'r4:920-953 r11:912-971 g18:938-995 g25:860-995 g32:840-912 r39:850-983 r46:978-1062 g53:942-1022 r60:954-1004 g67:909-980 r74:942-995 r81:978-1152 g87:1125-1235 g95:1077-1145 r101:1074-1185 g108:1117-1205 g115:1125-1154 g122:1083-1160 r129:1105-1158 r136:1140-1190 r143:1143-1178 g150:1090-1155 g157:1011-1104 r164:1023-1239 g171:1200-1260 r178:1206-1296 r185:1203-1293 r192:1260-1368 g199:1251-1340 g206:1218-1281 g213:1092-1269 r220:1167-1256 g227:1089-1250 g234:1050-1120 g241:918-1102 g248:600-960 g255:345-623 r262:453-570 r269:490-555 g276:471-555 r283:507-542 g290:447-533 g297:483-515 g304:441-530 g311:408-486 g318:415-459 r325:396-480 r332:441-497 g338:435-520 g345:415-494 r353:363-549 r360:501-759 g366:609-725 g373:578-644 g380:511-635 r387:543-705 g394:638-710 r401:618-672 g408:591-662 r415:627-773 g422:726-797 r429:726-800 r436:768-885 g443:765-822 g450:774-815 r457:780-810 g463:747-810 r471:762-812 r478:765-795 g485:738-810 g492:711-797 r499:711-755 r506:732-804 g512:759-825 r520:762-893 g527:780-900 g534:573-842 r541:549-729 g548:579-669 r555:585-695 g562:582-678 r568:594-651 r575:567-659 r582:474-710 r590:693-780 g596:711-785 r603:678-819 r610:705-762 r617:735-782 g624:702-765 g631:682-735 r638:705-774 r645:753-809 g652:744-807 g659:708-767 g666:705-744 g673:585-714 g680:562-660 g687:579-660 g694:441-602 r700:421-602 g708:474-597 g715:465-513 g722:454-515 g729:429-492 g736:426-494 r743:435-500 r749:435-530 g757:483-512 r764:483-528 g771:477-533 g778:450-500 r785:458-533 g791:495-530 r799:501-567 r806:525-557 r812:525-552 r819:531-545 g826:465-549 r833:483-518 g840:474-513 g847:477-507 r854:483-540 g862:486-516 g868:429-503 g875:327-476 g882:387-443 g889:156-429 g896:75-197 r903:138-279 g910:198-258 r917:182-276 r924:237-335 g931:273-329 r938:276-654 g945:537-665' }
];

const paths = { g: '', r: '' };
for (const seg of segments) {
  for (const bar of seg.bars.split(' ')) {
    const [x, high, low] = bar.slice(1).split(/[:-]/).map(Number);
    paths[bar[0]] += `M${(seg.x + x / 3).toFixed(1)} ${(seg.y + high / 3).toFixed(1)}V${(seg.y + low / 3).toFixed(1)}`;
  }
}
document.getElementById('rise').setAttribute('d', paths.g);
document.getElementById('fall').setAttribute('d', paths.r);

let grid = '';
for (let i = 0; i < 13; i++) grid += `M${Math.round(51.6 + i * 111.7)}.5 0V708`;
for (let i = 0; i < 22; i++) grid += `M0 ${Math.round(32 + i * 31.7)}.5H1422`;
document.getElementById('grid').setAttribute('d', grid);
```
